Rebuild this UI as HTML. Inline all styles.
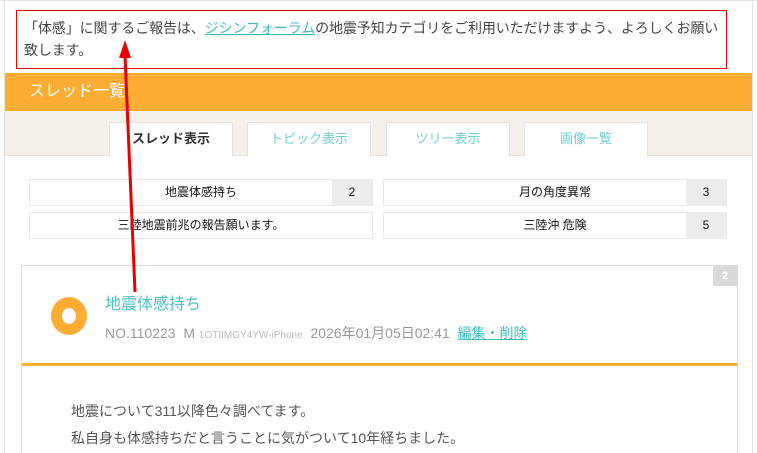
<!DOCTYPE html>
<html style="width:757px;height:453px;overflow:hidden"><head><meta charset="utf-8"><style>
*{margin:0;padding:0;box-sizing:border-box}
body{width:757px;height:453px;overflow:hidden;background:#fff;font-family:"Liberation Sans","Noto Sans CJK JP",sans-serif;position:relative;color:#333}
.wrap{position:absolute;left:4px;top:0;width:749px;height:453px;border-left:1px solid #e4e4e4;border-right:1px solid #e4e4e4}
.top{position:absolute;left:0;top:0;width:757px;height:2px;border-top:1px solid #e8e8e8}
.notice{position:absolute;left:16px;top:10px;width:711px;height:59px;border:1px solid #e60000;font-size:14px;letter-spacing:-0.1px;line-height:22px;padding:6px 0 0 7px;color:#444;white-space:nowrap;overflow:hidden}
.notice a{color:#3cbcc0;text-decoration:underline}
.bar{position:absolute;left:5px;top:73px;width:747px;height:38px;background:#fdad34;color:#fff;font-size:16px;line-height:38px;padding-left:24px}
.tabs{position:absolute;left:5px;top:111px;width:747px;height:45px;background:#f5f1ea;border-bottom:1px solid #e4e4e4}
.tab{position:absolute;top:11px;width:124px;height:35px;background:#fff;border:1px solid #e4e4e4;border-bottom:none;text-align:center;font-size:13px;line-height:32px;color:#6ccfd4}
.tab.on{color:#333;font-weight:bold}
.row{position:absolute;height:27px;border:1px solid #e8e8e8;font-size:12px;line-height:25px;text-align:center;color:#111}
.row .c{position:absolute;right:0;top:-1px;width:40px;height:27px;background:#ececec;line-height:27px}
.post{position:absolute;left:21px;top:265px;width:717px;height:188px;border:1px solid #dcdcdc;border-bottom:none}
.badge{position:absolute;right:0;top:0;width:24px;height:20px;background:#d9d9d9;color:#fff;font-size:11px;font-weight:bold;text-align:center;line-height:20px}
.circ{position:absolute;left:29px;top:31px;width:36px;height:38px;border-radius:50%;border:11px solid #fdad34}
.title{position:absolute;left:83px;top:24px;font-size:16px;color:#4cc2c6}
.meta{position:absolute;left:83px;top:57px;font-size:14px;color:#999;white-space:nowrap}
.meta small{font-size:10px;color:#bbb}
.meta a{color:#3cbcc0;text-decoration:underline}
.line{position:absolute;left:0;top:97px;width:715px;height:3px;background:#fdad34}
.body{position:absolute;left:49px;top:132px;font-size:14px;line-height:27px;color:#555}
svg{position:absolute;left:0;top:0}
</style></head><body>
<div class="top"></div>
<div class="wrap"></div>
<div class="notice">「体感」に関するご報告は、<a>ジシンフォーラム</a>の地震予知カテゴリをご利用いただけますよう、よろしくお願い<br>致します。</div>
<div class="bar">スレッド一覧</div>
<div class="tabs">
<div class="tab on" style="left:104px">スレッド表示</div>
<div class="tab" style="left:242px">トピック表示</div>
<div class="tab" style="left:381px">ツリー表示</div>
<div class="tab" style="left:519px">画像一覧</div>
</div>
<div class="row" style="left:29px;top:179px;width:344px">地震体感持ち<span class="c">2</span></div>
<div class="row" style="left:383px;top:179px;width:344px">月の角度異常<span class="c">3</span></div>
<div class="row" style="left:29px;top:212px;width:344px">三陸地震前兆の報告願います。</div>
<div class="row" style="left:383px;top:212px;width:344px">三陸沖 危険<span class="c">5</span></div>
<div class="post">
<div class="badge">2</div>
<div class="circ"></div>
<div class="title">地震体感持ち</div>
<div class="meta">NO.110223&nbsp; M <small>1OTIIMGY4YW-iPhone</small>&nbsp; 2026年01月05日02:41&nbsp; <a>編集・削除</a></div>
<div class="line"></div>
<div class="body">地震について311以降色々調べてます。<br>私自身も体感持ちだと言うことに気がついて10年経ちました。</div>
</div>
<svg width="757" height="453"><line x1="135" y1="292" x2="125" y2="55" stroke="#e60000" stroke-width="3"/><polygon points="125,40 119,58 131,58" fill="#e60000"/></svg>
</body></html>
